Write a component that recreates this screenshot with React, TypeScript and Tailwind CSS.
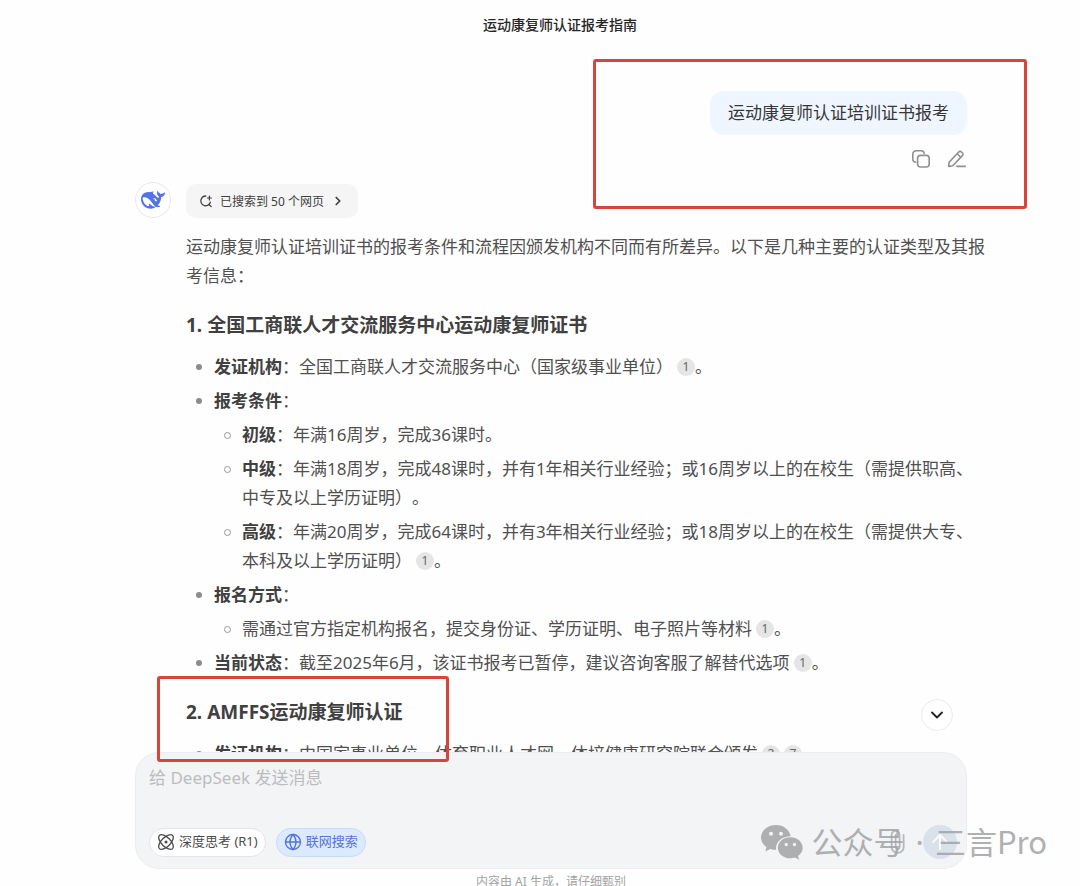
import { useState } from "react";
import type { ReactNode } from "react";
import clsx from "clsx";
import { ArrowUp, ChevronDown, ChevronRight, Globe, Paperclip } from "lucide-react";

type Item = {
    label?: string;
    text?: string;
    refs?: number[];
    end?: string;
    children?: Item[];
};

const certItems: Item[] = [
    { label: "发证机构", text: "：全国工商联人才交流服务中心（国家级事业单位）", refs: [1], end: "。" },
    {
        label: "报考条件",
        text: "：",
        children: [
            { label: "初级", text: "：年满16周岁，完成36课时。" },
            {
                label: "中级",
                text: "：年满18周岁，完成48课时，并有1年相关行业经验；或16周岁以上的在校生（需提供职高、中专及以上学历证明）。",
            },
            {
                label: "高级",
                text: "：年满20周岁，完成64课时，并有3年相关行业经验；或18周岁以上的在校生（需提供大专、本科及以上学历证明）",
                refs: [1],
                end: "。",
            },
        ],
    },
    {
        label: "报名方式",
        text: "：",
        children: [
            { text: "需通过官方指定机构报名，提交身份证、学历证明、电子照片等材料", refs: [1], end: "。" },
        ],
    },
    { label: "当前状态", text: "：截至2025年6月，该证书报考已暂停，建议咨询客服了解替代选项", refs: [1], end: "。" },
];

const amffsItems: Item[] = [
    { label: "发证机构", text: "：中国家事业单位、体育职业人才网、体培健康研究院联合颁发", refs: [2, 7] },
];

const WhaleIcon = () => (
    <svg viewBox="0 0 24 24" className="h-6 w-6" fill="#5573e6" aria-hidden="true">
        <path d="M23.748 4.482c-.254-.124-.364.113-.512.234-.051.039-.094.09-.137.136-.372.397-.806.657-1.373.626-.829-.046-1.537.214-2.163.848-.133-.782-.575-1.248-1.247-1.548-.352-.156-.708-.311-.955-.65-.172-.241-.219-.51-.305-.774-.055-.16-.11-.323-.293-.35-.2-.031-.278.136-.356.276-.313.572-.434 1.202-.422 1.84.027 1.436.633 2.58 1.838 3.393.137.093.172.187.129.323-.082.28-.18.552-.266.833-.055.179-.137.217-.329.14a5.526 5.526 0 01-1.736-1.18c-.857-.828-1.631-1.742-2.597-2.458a11.365 11.365 0 00-.689-.471c-.985-.957.13-1.743.388-1.836.27-.098.093-.432-.779-.428-.872.004-1.67.295-2.687.684a3.055 3.055 0 01-.465.137 9.597 9.597 0 00-2.883-.102c-1.885.21-3.39 1.102-4.497 2.623C.082 8.606-.231 10.684.152 12.85c.403 2.284 1.569 4.175 3.36 5.653 1.858 1.533 3.997 2.284 6.438 2.14 1.482-.085 3.133-.284 4.994-1.86.47.234.962.327 1.78.397.63.059 1.236-.03 1.705-.128.735-.156.684-.837.419-.961-2.155-1.004-1.682-.595-2.113-.926 1.096-1.296 2.746-2.642 3.392-7.003.05-.347.007-.565 0-.845-.004-.17.035-.237.23-.256a4.173 4.173 0 001.545-.475c1.396-.763 1.96-2.015 2.093-3.517.02-.23-.004-.467-.247-.588zM11.581 18c-2.089-1.642-3.102-2.183-3.52-2.16-.392.024-.321.471-.235.763.09.288.207.486.371.739.114.167.192.416-.113.603-.673.416-1.842-.14-1.897-.167-1.361-.802-2.5-1.86-3.301-3.307-.774-1.393-1.224-2.887-1.298-4.482-.02-.386.093-.522.477-.592a4.696 4.696 0 011.529-.039c2.132.312 3.946 1.265 5.468 2.774.868.86 1.525 1.887 2.202 2.891.72 1.066 1.494 2.082 2.48 2.914.348.292.625.514.891.677-.802.09-2.14.11-3.054-.614zm1-6.44a.306.306 0 01.415-.287.302.302 0 01.2.288.306.306 0 01-.31.307.303.303 0 01-.304-.308zm3.11 1.596c-.2.081-.399.151-.59.16a1.245 1.245 0 01-.798-.254c-.274-.23-.47-.358-.552-.758a1.73 1.73 0 01.016-.588c.07-.327-.008-.537-.239-.727-.187-.156-.426-.199-.688-.199a.559.559 0 01-.254-.078c-.11-.054-.2-.19-.114-.358.028-.054.16-.186.192-.21.356-.202.767-.136 1.146.016.352.144.618.408 1.001.782.391.451.462.576.685.914.176.265.336.537.445.848.067.195-.019.354-.25.452z" />
    </svg>
);

const CopyIcon = () => (
    <svg viewBox="0 0 20 20" className="h-5 w-5" fill="none" stroke="currentColor" strokeWidth="1.6" aria-hidden="true">
        <rect x="6.6" y="6.4" width="11.6" height="11.6" rx="3" />
        <path d="M4.8 13.2A3 3 0 0 1 1.8 10.2V5A3.2 3.2 0 0 1 5 1.8h5.2a3 3 0 0 1 3 2.6" strokeLinecap="round" />
    </svg>
);

const EditIcon = () => (
    <svg viewBox="0 0 20 20" className="h-5 w-5" fill="none" stroke="currentColor" strokeWidth="1.6" strokeLinejoin="round" aria-hidden="true">
        <path d="M1.6 17.4l.5-4.2L11.7 3a1.9 1.9 0 0 1 2.8 0l.9.8a1.9 1.9 0 0 1 0 2.8L5.8 16.8z" />
        <path d="M10.2 4.7l3.5 3.5" />
        <path d="M9.8 17.4h8.4" strokeLinecap="round" />
    </svg>
);

const SearchIcon = () => (
    <svg viewBox="0 0 14 14" className="h-[14px] w-[14px]" fill="none" stroke="currentColor" strokeWidth="1.3" strokeLinecap="round" aria-hidden="true">
        <path d="M6.8 2A4.9 4.9 0 1 0 10 10.5L12.2 12.6" />
        <path d="M10 10.5A4.9 4.9 0 0 0 11.3 8.2" />
        <path d="M10.4 2v4M8.4 4h4" strokeWidth="1.2" />
    </svg>
);

const AtomIcon = () => (
    <svg viewBox="0 0 20 20" className="h-[18px] w-[18px]" fill="none" stroke="currentColor" strokeWidth="1.5" aria-hidden="true">
        <ellipse cx="10" cy="10" rx="10.4" ry="5" transform="rotate(45 10 10)" />
        <ellipse cx="10" cy="10" rx="10.4" ry="5" transform="rotate(-45 10 10)" />
        <circle cx="10" cy="10" r="1.7" fill="currentColor" stroke="none" />
    </svg>
);

const WechatIcon = () => (
    <svg viewBox="0 0 42 36" className="h-9 w-[42px]" fill="currentColor" aria-hidden="true">
        <path
            fillRule="evenodd"
            d="M15 1C6.7 1 0 6.5 0 13.5c0 3.9 2.1 7.3 5.5 9.6L4.3 27.5l5-2.6c1.8.6 3.7.9 5.9.9C14 18.5 20.5 12.3 29.7 12.2 28.5 5.7 22.4 1 15 1zM10 7.8a2 2 0 1 1 0 4 2 2 0 0 1 0-4zm10 0a2 2 0 1 1 0 4 2 2 0 0 1 0-4z"
        />
        <path
            fillRule="evenodd"
            d="M29.3 13.2c-7 0-12.5 4.7-12.5 10.5s5.6 10.6 12.5 10.6c1.6 0 3.2-.3 4.6-.7l4.3 2.1-1.2-3.8c2.9-2 4.7-4.9 4.7-8.2 0-5.8-5.5-10.5-12.4-10.5zM25.2 18.8a1.7 1.7 0 1 1 0 3.4 1.7 1.7 0 0 1 0-3.4zm8.3 0a1.7 1.7 0 1 1 0 3.4 1.7 1.7 0 0 1 0-3.4z"
        />
    </svg>
);

const Cite = ({ n }: { n: number }) => (
    <a
        href={`#ref-${n}`}
        className="ml-1 inline-flex h-[18px] w-[18px] items-center justify-center rounded-full bg-[#e5e5e5] align-[2px] text-[12px] leading-none text-[#666]"
    >
        {n}
    </a>
);

const ItemList = ({ items, nested = false }: { items: Item[]; nested?: boolean }) => (
    <ul className={clsx("flex flex-col gap-[5px]", nested && "mt-[5px]")}>
        {items.map((item, i) => (
            <li key={i} className="relative pl-7">
                {/* bullet sits in the item's indent */}
                <span
                    className={clsx(
                        "absolute top-3 left-[10px] rounded-full",
                        nested ? "h-[7px] w-[7px] border border-[#999]" : "h-[6px] w-[6px] bg-[#8c8c8c]"
                    )}
                />
                {item.label && <strong className="font-bold text-[#404040]">{item.label}</strong>}
                {item.text}
                {item.refs?.map((n) => <Cite key={n} n={n} />)}
                {item.end}
                {item.children && <ItemList items={item.children} nested />}
            </li>
        ))}
    </ul>
);

const Heading = ({ children }: { children: ReactNode }) => (
    <h3 className="mt-[21px] mb-[13px] text-[19px] leading-7 font-bold text-[#404040]">{children}</h3>
);

const App = () => {
    const [message, setMessage] = useState("");
    const [deepThink, setDeepThink] = useState(false);
    const [webSearch, setWebSearch] = useState(true);

    return (
        <div
            lang="zh-CN"
            className="relative flex h-screen flex-col overflow-hidden bg-[#fefefe] font-['Noto_Sans','Noto_Sans_CJK_SC',sans-serif] text-[#505050] [text-spacing-trim:space-all]"
        >
            <header className="flex h-12 shrink-0 items-center justify-center pl-10">
                <h1 className="text-[14px] font-medium text-[#262626]">运动康复师认证报考指南</h1>
            </header>

            <main className="min-h-0 flex-1 overflow-hidden pl-[22px]">
                <div className="mx-auto max-w-[832px] pt-[43px]">
                    <div className="relative flex flex-col items-end">
                        <p className="rounded-[14px] bg-[#eff6ff] px-[18px] py-2 text-[17px] leading-7 text-[#363636]">
                            运动康复师认证培训证书报考
                        </p>
                        <div className="mt-[14px] flex gap-4 text-[#909090]">
                            <button type="button" aria-label="复制"><CopyIcon /></button>
                            <button type="button" aria-label="编辑"><EditIcon /></button>
                        </div>
                        <div className="pointer-events-none absolute -top-8 -right-[60px] h-[150px] w-[434px] rounded-[3px] border-3 border-[#d5453b]" />
                    </div>

                    <div className="mt-[13px] flex items-start gap-[15px]">
                        <div className="flex h-9 w-9 shrink-0 items-center justify-center rounded-full border border-[#e8e8ee] bg-white">
                            <WhaleIcon />
                        </div>
                        <article className="-mr-5 min-w-0 flex-1 text-[17px] leading-[29px]">
                            <button
                                type="button"
                                className="mt-[2px] mb-[14px] flex h-[34px] items-center gap-[7px] rounded-[10px] bg-[#f5f5f5] px-[13px] text-[12px] text-[#404040]"
                            >
                                <SearchIcon />
                                已搜索到 50 个网页
                                <ChevronRight className="h-[14px] w-[14px]" strokeWidth={3} />
                            </button>
                            <p>
                                运动康复师认证培训证书的报考条件和流程因颁发机构不同而有所差异。以下是几种主要的认证类型及其报考信息：
                            </p>
                            <Heading>1. 全国工商联人才交流服务中心运动康复师证书</Heading>
                            <ItemList items={certItems} />
                            <Heading>2. AMFFS运动康复师认证</Heading>
                            <ItemList items={amffsItems} />
                        </article>
                    </div>
                </div>
            </main>

            <footer className="shrink-0 pl-[22px]">
                <div className="relative mx-auto max-w-[832px]">
                    <button
                        type="button"
                        aria-label="滚动到底部"
                        className="absolute -top-[53px] right-[14px] flex h-8 w-8 items-center justify-center rounded-full border border-[#ececec] bg-white text-[#222]"
                    >
                        <ChevronDown className="h-5 w-5" strokeWidth={2.2} />
                    </button>
                    <div className="rounded-3xl border border-[#ededf0] bg-[#f3f4f6] pt-3 pr-[9px] pb-[9px] pl-[13px]">
                        <textarea
                            aria-label="消息"
                            rows={1}
                            value={message}
                            onChange={(e) => setMessage(e.target.value)}
                            placeholder="给 DeepSeek 发送消息"
                            className="block h-[60px] w-full resize-none bg-transparent text-[17px] leading-[26px] outline-none placeholder:text-[#bcbcc0]"
                        />
                        <div className="flex h-[34px] items-center gap-[10px]">
                            <button
                                type="button"
                                aria-pressed={deepThink}
                                onClick={() => setDeepThink(!deepThink)}
                                className="flex h-[29px] items-center gap-1 rounded-full border border-[#e3e4e8] bg-white px-[7px] text-[13px] text-[#4c4c4c]"
                            >
                                <AtomIcon />
                                深度思考 (R1)
                            </button>
                            <button
                                type="button"
                                aria-pressed={webSearch}
                                onClick={() => setWebSearch(!webSearch)}
                                className="flex h-[29px] items-center gap-1 rounded-full border border-[#c6dcf8] bg-[#dbeafe] px-[7px] text-[13px] text-[#5573dc]"
                            >
                                <Globe className="h-[18px] w-[18px]" strokeWidth={1.8} />
                                联网搜索
                            </button>
                            <button type="button" aria-label="上传附件" className="mr-1 ml-auto text-[#b5b7bb]">
                                <Paperclip className="h-6 w-6 -rotate-45" strokeWidth={1.8} />
                            </button>
                            <button
                                type="button"
                                aria-label="发送"
                                className="flex h-[34px] w-[34px] items-center justify-center rounded-full bg-[#d9e1eb] text-[#f8fafc]"
                            >
                                <ArrowUp className="h-6 w-6" strokeWidth={2} />
                            </button>
                        </div>
                    </div>
                    <p className="-mb-1 pt-1 text-center text-[12px] leading-[17px] text-[#a3a3a3]">
                        内容由 AI 生成，请仔细甄别
                    </p>
                </div>
            </footer>

            <div className="pointer-events-none absolute bottom-[124px] left-[157px] h-[86px] w-[292px] rounded-[3px] border-3 border-[#d5453b]" />

            <div className="pointer-events-none absolute right-[33px] bottom-[22px] flex items-center gap-2 text-[#a2a3a4] opacity-85">
                <WechatIcon />
                <span className="font-['Noto_Sans_CJK_SC',sans-serif] text-[31px] leading-[44px]">
                    公众号<span className="mx-[3px] font-['Noto_Sans',sans-serif]"> · </span>三言Pro
                </span>
            </div>
        </div>
    );
};

export default App;
